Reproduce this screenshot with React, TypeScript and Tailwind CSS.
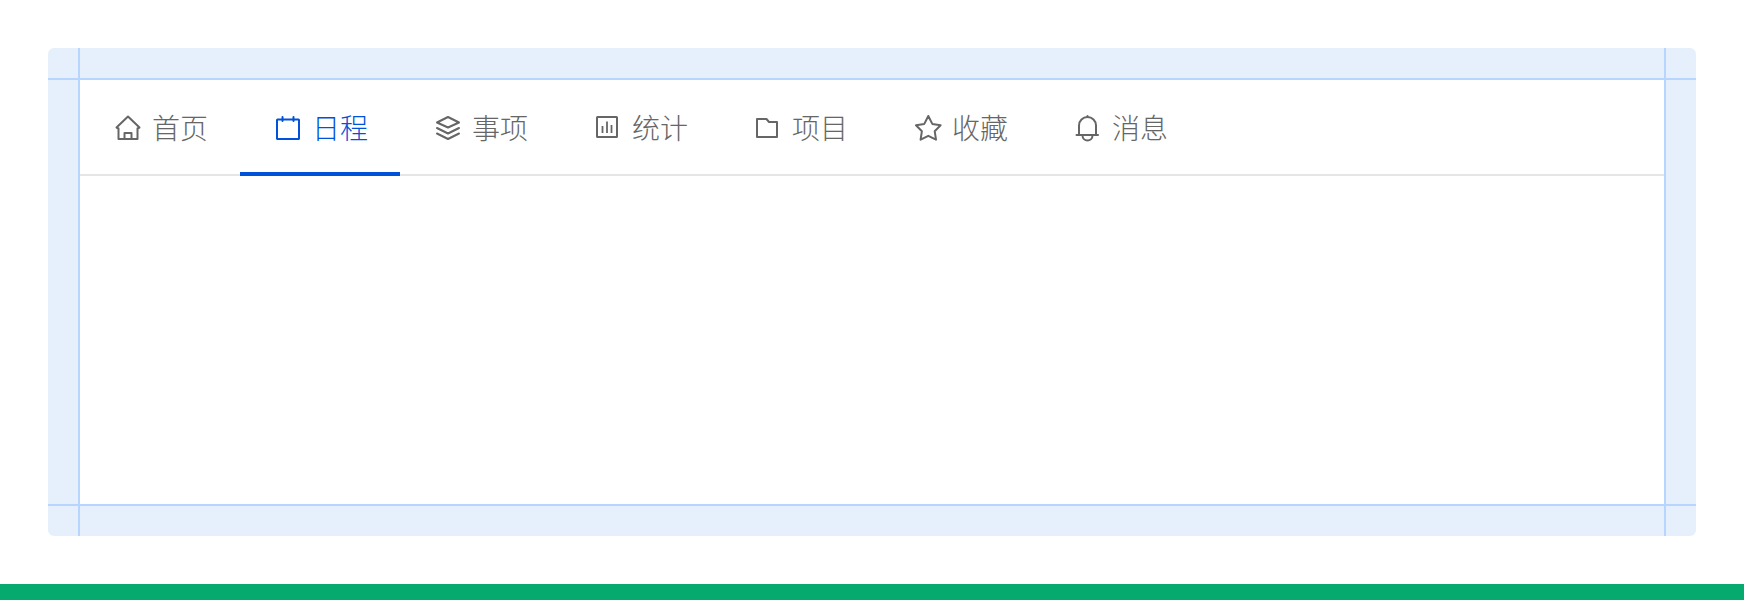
import React from "react";

const P = { fill: "none", stroke: "currentColor", strokeWidth: 2, strokeLinejoin: "round" as const, strokeLinecap: "round" as const };

function Icon({ children }: { children: React.ReactNode }) {
  return (
    <svg viewBox="0 0 32 32" className="w-8 h-8 shrink-0" {...P}>
      {children}
    </svg>
  );
}

const tabs: { label: string; active?: boolean; icon: React.ReactNode }[] = [
  {
    label: "首页",
    icon: (
      <Icon>
        <path d="M16 4.5 L27.5 15.5 L25.5 16.5 V27 H6.5 V16.5 L4.5 15.5 Z" />
        <path d="M12.5 27 V21 H19.5 V27" />
      </Icon>
    ),
  },
  {
    label: "日程",
    active: true,
    icon: (
      <Icon>
        <rect x="5" y="7.5" width="22" height="19.5" rx="0.5" />
        <path d="M10.5 5 V9 M21.5 5 V9" />
      </Icon>
    ),
  },
  {
    label: "事项",
    icon: (
      <Icon>
        <path d="M16 5 L27 10.5 L16 15.5 L5 10.5 Z" />
        <path d="M5 16 L16 21.5 L27 16" />
        <path d="M5 21.5 L16 27 L27 21.5" />
      </Icon>
    ),
  },
  {
    label: "统计",
    icon: (
      <Icon>
        <rect x="5" y="5" width="20" height="20" rx="0.5" />
        <path d="M10.5 14 V21 M15 9.5 V21 M19.5 13 V21" strokeWidth="1.8" strokeLinecap="butt" />
      </Icon>
    ),
  },
  {
    label: "项目",
    icon: (
      <Icon>
        <path d="M5 7 H14.5 L17 10 H25 V25 H5 Z" />
      </Icon>
    ),
  },
  {
    label: "收藏",
    icon: (
      <Icon>
        <path d="M16.3 4 L20.3 11.9 L28.6 13.2 L22.7 19.2 L24 27.7 L16.3 23.8 L8.6 27.7 L9.9 19.2 L4 13.2 L12.3 11.9 Z" />
      </Icon>
    ),
  },
  {
    label: "消息",
    icon: (
      <Icon>
        <path d="M7 23 V13.5 A8.5 8.5 0 0 1 24 13.5 V23" />
        <path d="M4.5 23 H26" />
        <path d="M10.5 23.5 A5 5 0 0 0 20.5 23.5" />
        <path d="M15.5 4 V5" />
      </Icon>
    ),
  },
];

export default function App() {
  return (
    <div
      className="w-[1744px] h-[600px] bg-white flex flex-col overflow-hidden"
      style={{ fontFamily: '"Noto Sans CJK SC", "Noto Sans", sans-serif' }}
    >
      <div className="flex-1 pt-12 px-12">
        <div className="h-[488px] rounded-md bg-[#e5f0fc] overflow-hidden grid grid-cols-[32px_1fr_32px] grid-rows-[32px_1fr_32px]">
          <div className="border-r-2 border-b-2 border-[#b8d5ff]" />
          <div className="border-b-2 border-[#b8d5ff]" />
          <div className="border-l-2 border-b-2 border-[#b8d5ff]" />
          <div className="border-r-2 border-[#b8d5ff]" />
          <div className="bg-white">
            <div className="flex h-24 border-b-2 border-[#e5e5e5]">
              {tabs.map((t) => (
                <div
                  key={t.label}
                  className={
                    t.active
                      ? "relative w-40 h-24 shrink-0 flex items-center gap-2 pl-8 text-[#0052d9]"
                      : "relative w-40 h-24 shrink-0 flex items-center gap-2 pl-8 text-[#666666]"
                  }
                >
                  {t.icon}
                  <span className="text-[28px] leading-none font-light pb-[2px]">{t.label}</span>
                  {t.active && <div className="absolute left-0 right-0 top-[92px] h-1 bg-[#0052d9]" />}
                </div>
              ))}
            </div>
          </div>
          <div className="border-l-2 border-[#b8d5ff]" />
          <div className="border-r-2 border-t-2 border-[#b8d5ff]" />
          <div className="border-t-2 border-[#b8d5ff]" />
          <div className="border-l-2 border-t-2 border-[#b8d5ff]" />
        </div>
      </div>
      <div className="h-4 bg-[#06a96e]" />
    </div>
  );
}
